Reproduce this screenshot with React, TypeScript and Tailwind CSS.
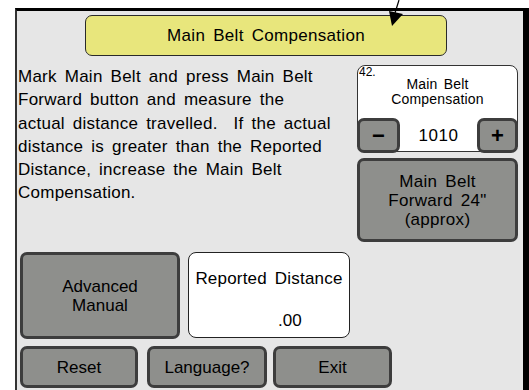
import React from "react";

const font = { fontFamily: '"Liberation Sans", Arial, sans-serif' };

function GrayButton({
  className,
  children,
}: {
  className?: string;
  children: React.ReactNode;
}) {
  return (
    <button
      className={`flex items-center justify-center rounded-[7px] border-[3px] border-[#3d3d3d] bg-[#8e8f8c] text-center text-[17px] leading-[19px] text-black ${className ?? ""}`}
    >
      {children}
    </button>
  );
}

export default function App() {
  return (
    <div
      className="relative h-[390px] w-[529px] overflow-hidden bg-white text-black"
      style={font}
    >
      {/* annotation arrow */}
      <svg
        className="absolute left-0 top-0 z-10"
        width="529"
        height="40"
        viewBox="0 0 529 40"
      >
        <line x1="399" y1="0" x2="395" y2="13" stroke="black" strokeWidth="1.2" />
        <polygon points="389,11 403,14 392,26" fill="black" />
      </svg>

      <div className="ml-[15px] mt-[8px] h-[382px] border-l-2 border-r-[6px] border-t-[3px] border-l-[#333] border-r-black border-t-black bg-[#e6e6e6]">
        {/* title */}
        <div className="ml-[68px] mt-[4px] flex h-[41px] w-[362px] items-center justify-center rounded-[7px] border-[1.5px] border-[#2a2a2a] bg-[#e8e67c] text-[17px] tracking-[0.3px] [word-spacing:3px]">
          Main Belt Compensation
        </div>

        {/* middle */}
        <div className="mt-[9px] flex">
          <p className="ml-[1px] w-[336px] text-[17px] leading-[23.3px] tracking-[0.25px] [word-spacing:3px]">
            Mark Main Belt and press Main Belt
            <br />
            Forward button and measure the
            <br />
            actual distance travelled.&nbsp; If the actual
            <br />
            distance is greater than the Reported
            <br />
            Distance, increase the Main Belt
            <br />
            Compensation.
          </p>

          <div className="ml-[3px] flex w-[161px] flex-col gap-[6px]">
            <div className="relative h-[87px] rounded-[8px] border border-[#333] bg-white">
              <span className="absolute left-[1px] top-[0px] text-[12px] leading-[13px]">42.</span>
              <div className="pt-[11px] text-center text-[14px] leading-[15px] tracking-[0.2px] [word-spacing:2px]">
                Main Belt
                <br />
                Compensation
              </div>
              <div className="absolute bottom-[-2px] left-[-1px] right-[-1px] flex h-[35px] items-center justify-between">
                <GrayButton className="h-full w-[43px] text-[22px] font-bold">
                  −
                </GrayButton>
                <span className="text-[17px] tracking-[0.5px]">1010</span>
                <GrayButton className="h-full w-[41px] text-[22px] font-bold">
                  +
                </GrayButton>
              </div>
            </div>
            <GrayButton className="h-[84px] w-full tracking-[0.3px] [word-spacing:3px]">
              Main Belt
              <br />
              Forward 24"
              <br />
              (approx)
            </GrayButton>
          </div>
        </div>

        {/* lower */}
        <div className="ml-[3px] mt-[10px] flex gap-[8px]">
          <GrayButton className="h-[87px] w-[160px]">
            Advanced
            <br />
            Manual
          </GrayButton>
          <div className="flex h-[86px] w-[162px] flex-col rounded-[8px] border border-[#222] bg-white">
            <div className="pt-[16px] text-center text-[17px] leading-[19px] tracking-[0.2px] [word-spacing:3px]">
              Reported Distance
            </div>
            <div className="mt-[23px] pl-[89px] text-[17px] leading-[19px]">.00</div>
          </div>
        </div>

        {/* bottom */}
        <div className="ml-[3px] mt-[7px] flex">
          <GrayButton className="h-[42px] w-[118px]">Reset</GrayButton>
          <GrayButton className="ml-[9px] h-[42px] w-[120px]">Language?</GrayButton>
          <GrayButton className="ml-[6px] h-[42px] w-[119px]">Exit</GrayButton>
        </div>
      </div>
    </div>
  );
}
